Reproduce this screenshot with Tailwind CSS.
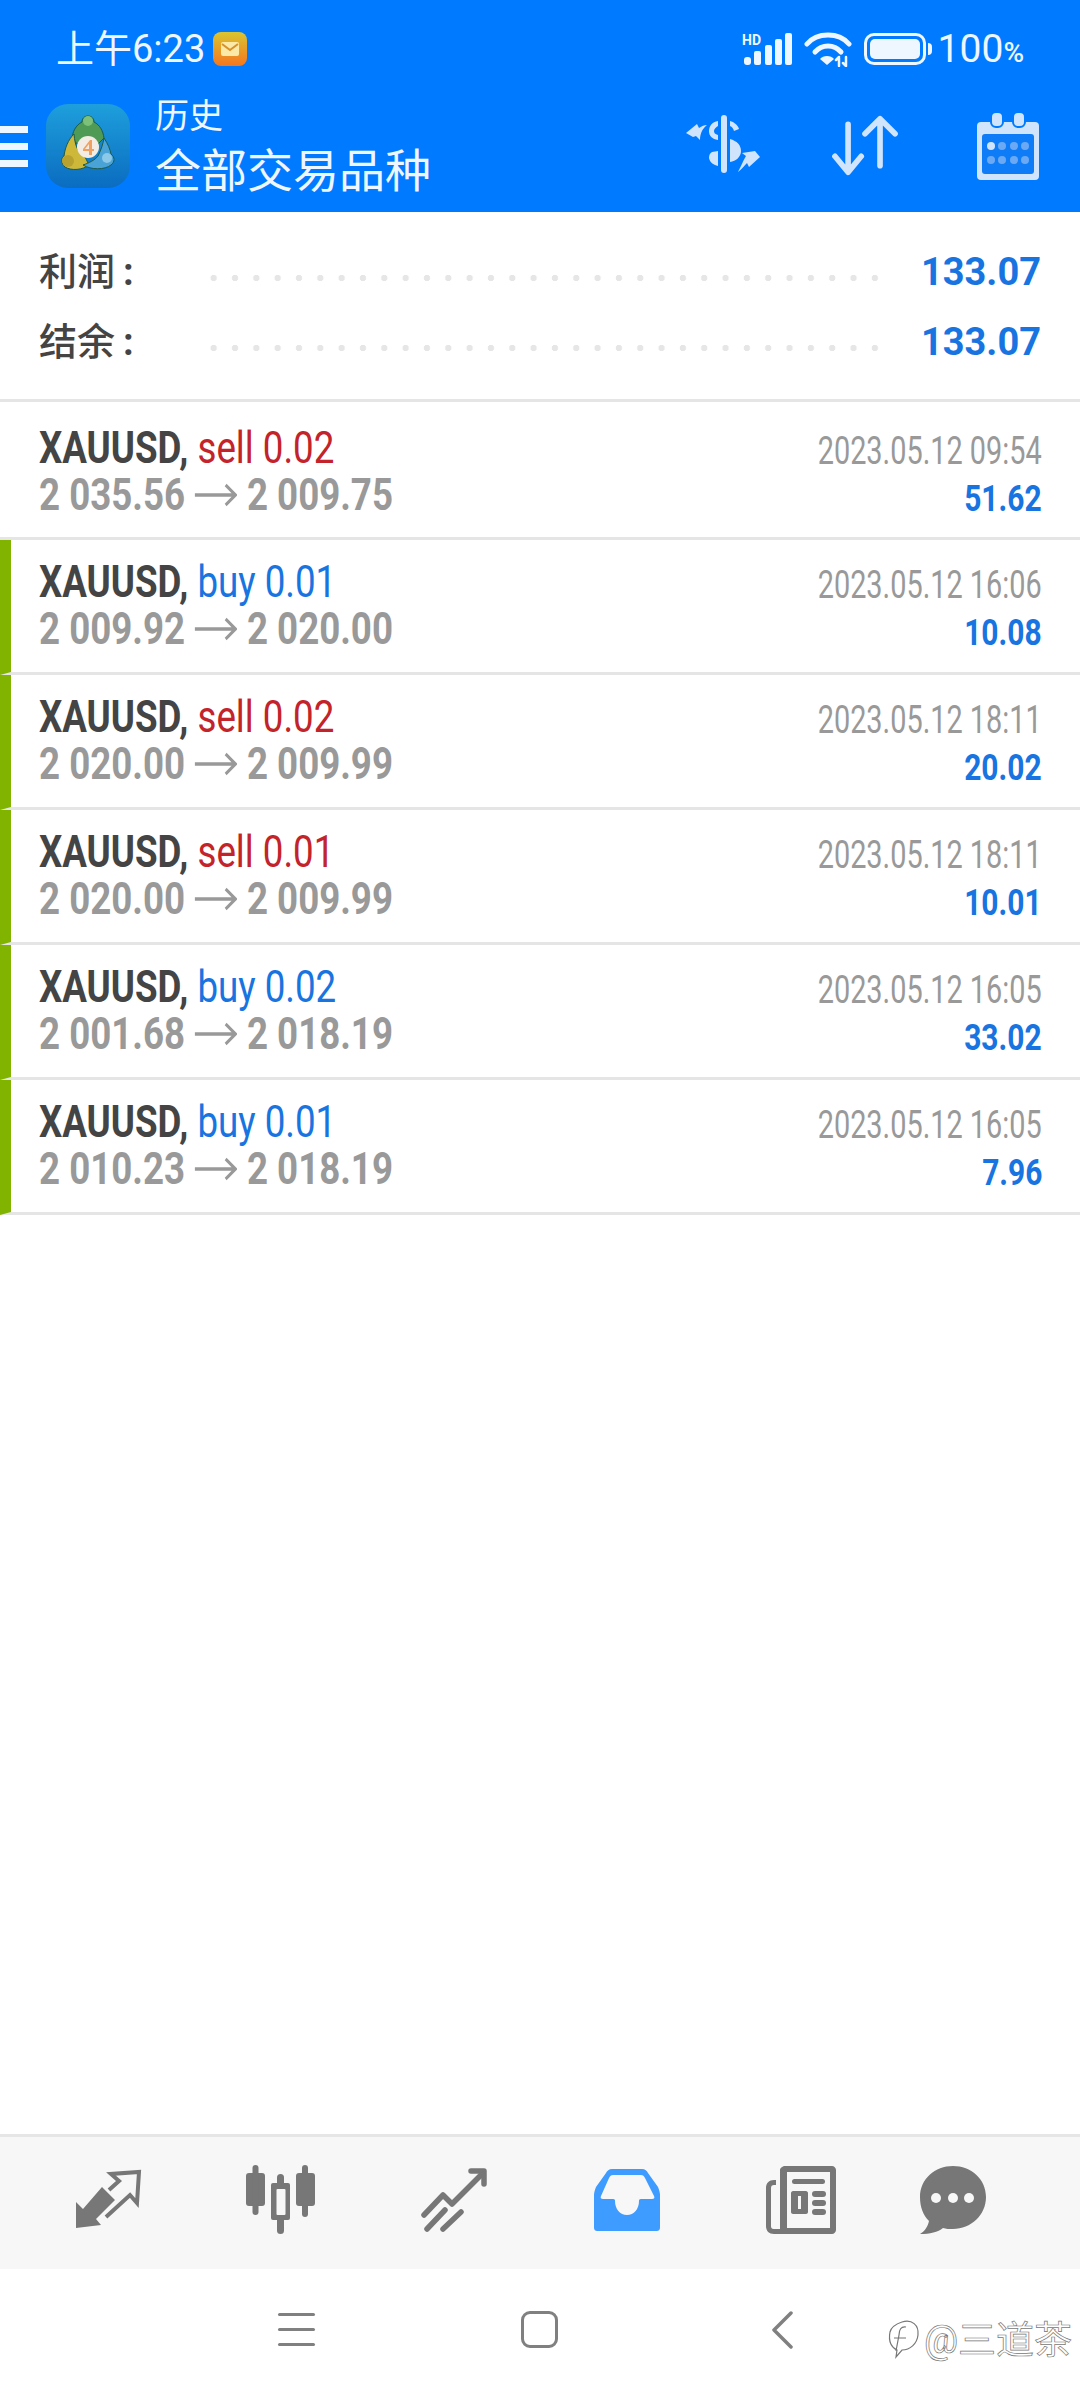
<!DOCTYPE html>
<html lang="zh">
<head>
  <meta charset="UTF-8" />
  <meta name="viewport" content="width=device-width, initial-scale=1.0"/>
  <title>历史</title>
  <script src="https://cdn.jsdelivr.net/npm/@tailwindcss/browser@4"></script>
</head>
<body class="bg-white font-['Roboto','Noto_Sans_CJK_SC',sans-serif]">
<div class="w-[1080px] h-[2400px] flex flex-col overflow-hidden">

  <!-- Header -->
  <div class="h-[212px] shrink-0 bg-[#007aff] text-white">
    <div class="h-[96px] flex items-center justify-between pl-[56px] pr-[56px] pt-[2px]">
      <div class="flex items-center gap-[8px]">
        <span class="text-[38px] text-[#eef6ff]">上午6:23</span>
        <svg class="w-[34px] h-[34px]" viewBox="0 0 34 34">
          <defs><linearGradient id="m" x1="0" y1="0" x2="0" y2="1"><stop offset="0" stop-color="#d9c531"/><stop offset="1" stop-color="#f5761f"/></linearGradient></defs>
          <rect width="34" height="34" rx="8" fill="url(#m)"/>
          <rect x="8" y="10" width="18" height="14" rx="2" fill="#fbe9a8"/>
          <path d="M9 12l8 6 8-6" fill="none" stroke="#d8902a" stroke-width="2"/>
        </svg>
      </div>
      <div class="flex items-center gap-[12px] text-[#eef6ff]">
        <svg class="w-[50px] h-[34px]" viewBox="0 0 50 34" fill="currentColor">
          <text x="0" y="13" font-size="14" font-weight="700" font-family="Roboto">HD</text>
          <rect x="2" y="25" width="7" height="8" rx="3"/><rect x="12" y="19" width="7" height="14" rx="2"/><rect x="23" y="13" width="7" height="20" rx="2"/><rect x="33" y="7" width="7" height="26" rx="2"/><rect x="43" y="1" width="7" height="32" rx="2"/>
        </svg>
        <svg class="w-[48px] h-[36px]" viewBox="0 0 48 36" fill="none" stroke="currentColor" stroke-width="5" stroke-linecap="round">
          <path d="M3 13C13 1 35 1 45 13"/><path d="M11 21c7-8 19-8 26 0"/>
          <path d="M23 34l-7-6c3-4 11-4 14 0z" fill="currentColor" stroke="none"/>
          <path d="M35 35v-8M32 29l3-3M42 26v9M39 32l3 3" stroke-width="2.5"/>
        </svg>
        <div class="flex items-center gap-[2px]">
          <div class="w-[62px] h-[32px] rounded-[10px] border-[3px] border-[#eef6ff] p-[3px]"><div class="w-full h-full rounded-[5px] bg-[#eef6ff]"></div></div>
          <div class="w-[4px] h-[12px] rounded-r bg-[#eef6ff]"></div>
        </div>
        <span class="text-[39px] -ml-[6px]">100<span class="text-[28px] font-medium">%</span></span>
      </div>
    </div>
    <div class="flex items-center h-[116px] pb-[16px]">
      <div class="w-[28px] flex flex-col gap-[10px] shrink-0">
        <div class="h-[7px] bg-[#eef6ff]"></div><div class="h-[7px] bg-[#eef6ff]"></div><div class="h-[7px] bg-[#eef6ff]"></div>
      </div>
      <svg class="w-[84px] h-[84px] ml-[18px] shrink-0" viewBox="0 0 84 84">
        <defs><linearGradient id="l" x1="0" y1="0" x2="0" y2="1"><stop offset="0" stop-color="#1e9fdc"/><stop offset="1" stop-color="#0b6cc0"/></linearGradient></defs>
        <rect width="84" height="84" rx="22" fill="url(#l)"/>
        <g stroke="#1c5a4a" stroke-width="1">
          <path d="M42 12c-4 0-6 3-6 6-6 3-10 10-10 18l6 4h20l6-6c-1-7-4-13-10-16 0-3-2-6-6-6z" fill="#4f9a55"/>
          <path d="M28 30c-6 6-9 14-10 22-3 1-3 8 1 11 6 4 18 3 24-2l-4-8c-6-3-10-10-11-23z" fill="#cdb83a"/>
          <path d="M58 34c4 6 6 11 7 16 4 3 4 8 0 11-6 5-20 5-28 0 6-2 12-5 15-9 3-6 5-12 6-18z" fill="#4aa3d6"/>
        </g>
        <circle cx="42" cy="17" r="5" fill="#7cc07a"/>
        <circle cx="22" cy="57" r="6" fill="#b7a22f"/>
        <circle cx="61" cy="54" r="5" fill="#8cc8e8"/>
        <circle cx="42" cy="43" r="11" fill="#f3ece4"/>
        <path d="M44 36l-7 9v2h6v4h3v-4h2v-2h-2v-9zm-1 4v5h-4z" fill="#f0a060"/>
      </svg>
      <div class="ml-[25px] self-start">
        <div class="text-[34px] leading-[40px] text-[#eef6ff]">历史</div>
        <div class="text-[46px] leading-[54px] mt-[8px] text-[#eef6ff]">全部交易品种</div>
      </div>
      <div class="ml-auto flex items-center pr-[40px] text-[#d0e4fc]">
        <svg class="w-[76px] h-[62px]" viewBox="0 0 76 62" fill="currentColor">
          <rect x="36" y="0" width="6" height="58" rx="3"/>
          <path d="M33 6c-6 1-9 5-9 10s3 8 9 9v-5c-3-1-4-2-4-4s2-4 4-5zM45 6c4 1 8 4 9 8l-5 2c-1-3-2-4-4-5zM45 24c7 2 11 6 11 12s-5 10-11 11zM33 36v15c-4-1-8-3-9-8 0-3 1-5 3-6z"/>
          <path d="M1 18l11-9 2 4c3-2 5-3 8-3-4 3-7 8-7 15l-4-4-3 1z"/>
          <path d="M75 40l-11 10-2-4c-3 3-5 6-9 9 3-6 5-11 8-16l-4-3 13-2z" transform="translate(0,2)"/>
        </svg>
        <svg class="w-[68px] h-[62px] ml-[70px]" viewBox="0 0 72 66" fill="none" stroke="currentColor" stroke-width="6" stroke-linecap="round" stroke-linejoin="round">
          <path d="M18 10v50M4 44l14 17 14-17"/>
          <path d="M52 4v50M36 20L52 4l16 16"/>
        </svg>
        <svg class="w-[64px] h-[68px] ml-[77px]" viewBox="0 0 64 68">
          <path d="M5 10h54a4 4 0 0 1 4 4v50a4 4 0 0 1-4 4H5a4 4 0 0 1-4-4V14a4 4 0 0 1 4-4z" fill="currentColor"/>
          <rect x="15" y="0" width="12" height="15" rx="5" fill="currentColor" stroke="#007aff" stroke-width="2"/>
          <rect x="37" y="0" width="12" height="15" rx="5" fill="currentColor" stroke="#007aff" stroke-width="2"/>
          <rect x="6" y="22" width="52" height="40" rx="3" fill="#0e7cf6"/>
          <g fill="#6ba9f5"><circle cx="15" cy="34" r="4" fill="#d0e4fc"/><circle cx="26" cy="34" r="4"/><circle cx="38" cy="34" r="4"/><circle cx="49" cy="34" r="4"/><circle cx="15" cy="48" r="4"/><circle cx="26" cy="48" r="4"/><circle cx="38" cy="48" r="4"/><circle cx="49" cy="48" r="4"/></g>
        </svg>
      </div>
    </div>
  </div>

  <!-- Summary -->
  <div class="h-[190px] shrink-0 border-b-[3px] border-[#e5e5e5] pt-[25px] pl-[39px] pr-[39px]">
    <div class="h-[70px] flex items-center">
      <span class="w-[164px] text-[38px] font-medium text-[#444]">利润<span class="ml-[8px] font-bold">:</span></span>
      <div class="w-[677px] h-[8px] mt-[12px] bg-[radial-gradient(circle,#e6e6e6_3px,transparent_3.5px)] bg-[length:21.33px_8px]"></div>
      <span class="ml-auto text-[38px] font-bold text-[#1874e0]">133.07</span>
    </div>
    <div class="h-[70px] flex items-center">
      <span class="w-[164px] text-[38px] font-medium text-[#444]">结余<span class="ml-[8px] font-bold">:</span></span>
      <div class="w-[677px] h-[8px] mt-[12px] bg-[radial-gradient(circle,#e6e6e6_3px,transparent_3.5px)] bg-[length:21.33px_8px]"></div>
      <span class="ml-auto text-[38px] font-bold text-[#1874e0]">133.07</span>
    </div>
  </div>

  <!-- Deals -->
  <div id="deals">
    <div class="h-[138px] border-b-[3px] border-[#e5e5e5] flex pl-[39px] pr-[38px] pt-[22px]">
      <div class="flex-1 origin-left scale-x-[.815]">
        <div class="text-[45px] leading-[47px] whitespace-nowrap"><b class="text-[#444]">XAUUSD,</b> <span class="text-[#c3232a]">sell 0.02</span></div>
        <div class="text-[45px] leading-[48px] font-bold text-[#999] whitespace-nowrap flex items-center gap-[12px]">2 035.56 <svg class="w-[52px] h-[24px]" viewBox="0 0 52 24" fill="none" stroke="#999" stroke-width="3.5"><path d="M0 12h50M38 2l12 10-12 10"/></svg> 2 009.75</div>
      </div>
      <div class="flex flex-col items-end mt-[3px]">
        <div class="text-[39px] leading-[48px] text-[#999] whitespace-nowrap origin-right scale-x-[.74]">2023.05.12 09:54</div>
        <div class="text-[37px] leading-[48px] font-bold text-[#1874e0] origin-right scale-x-[.81]">51.62</div>
      </div>
    </div>
    <div class="h-[135px] border-b-[3px] border-[#e5e5e5] border-l-[11px] border-l-[#80b400] flex pl-[28px] pr-[38px] pt-[18px]">
      <div class="flex-1 origin-left scale-x-[.815]">
        <div class="text-[45px] leading-[47px] whitespace-nowrap"><b class="text-[#444]">XAUUSD,</b> <span class="text-[#1874e0]">buy 0.01</span></div>
        <div class="text-[45px] leading-[48px] font-bold text-[#999] whitespace-nowrap flex items-center gap-[12px]">2 009.92 <svg class="w-[52px] h-[24px]" viewBox="0 0 52 24" fill="none" stroke="#999" stroke-width="3.5"><path d="M0 12h50M38 2l12 10-12 10"/></svg> 2 020.00</div>
      </div>
      <div class="flex flex-col items-end mt-[3px]">
        <div class="text-[39px] leading-[48px] text-[#999] whitespace-nowrap origin-right scale-x-[.74]">2023.05.12 16:06</div>
        <div class="text-[37px] leading-[48px] font-bold text-[#1874e0] origin-right scale-x-[.81]">10.08</div>
      </div>
    </div>
    <div class="h-[135px] border-b-[3px] border-[#e5e5e5] border-l-[11px] border-l-[#80b400] flex pl-[28px] pr-[38px] pt-[18px]">
      <div class="flex-1 origin-left scale-x-[.815]">
        <div class="text-[45px] leading-[47px] whitespace-nowrap"><b class="text-[#444]">XAUUSD,</b> <span class="text-[#c3232a]">sell 0.02</span></div>
        <div class="text-[45px] leading-[48px] font-bold text-[#999] whitespace-nowrap flex items-center gap-[12px]">2 020.00 <svg class="w-[52px] h-[24px]" viewBox="0 0 52 24" fill="none" stroke="#999" stroke-width="3.5"><path d="M0 12h50M38 2l12 10-12 10"/></svg> 2 009.99</div>
      </div>
      <div class="flex flex-col items-end mt-[3px]">
        <div class="text-[39px] leading-[48px] text-[#999] whitespace-nowrap origin-right scale-x-[.74]">2023.05.12 18:11</div>
        <div class="text-[37px] leading-[48px] font-bold text-[#1874e0] origin-right scale-x-[.81]">20.02</div>
      </div>
    </div>
    <div class="h-[135px] border-b-[3px] border-[#e5e5e5] border-l-[11px] border-l-[#80b400] flex pl-[28px] pr-[38px] pt-[18px]">
      <div class="flex-1 origin-left scale-x-[.815]">
        <div class="text-[45px] leading-[47px] whitespace-nowrap"><b class="text-[#444]">XAUUSD,</b> <span class="text-[#c3232a]">sell 0.01</span></div>
        <div class="text-[45px] leading-[48px] font-bold text-[#999] whitespace-nowrap flex items-center gap-[12px]">2 020.00 <svg class="w-[52px] h-[24px]" viewBox="0 0 52 24" fill="none" stroke="#999" stroke-width="3.5"><path d="M0 12h50M38 2l12 10-12 10"/></svg> 2 009.99</div>
      </div>
      <div class="flex flex-col items-end mt-[3px]">
        <div class="text-[39px] leading-[48px] text-[#999] whitespace-nowrap origin-right scale-x-[.74]">2023.05.12 18:11</div>
        <div class="text-[37px] leading-[48px] font-bold text-[#1874e0] origin-right scale-x-[.81]">10.01</div>
      </div>
    </div>
    <div class="h-[135px] border-b-[3px] border-[#e5e5e5] border-l-[11px] border-l-[#80b400] flex pl-[28px] pr-[38px] pt-[18px]">
      <div class="flex-1 origin-left scale-x-[.815]">
        <div class="text-[45px] leading-[47px] whitespace-nowrap"><b class="text-[#444]">XAUUSD,</b> <span class="text-[#1874e0]">buy 0.02</span></div>
        <div class="text-[45px] leading-[48px] font-bold text-[#999] whitespace-nowrap flex items-center gap-[12px]">2 001.68 <svg class="w-[52px] h-[24px]" viewBox="0 0 52 24" fill="none" stroke="#999" stroke-width="3.5"><path d="M0 12h50M38 2l12 10-12 10"/></svg> 2 018.19</div>
      </div>
      <div class="flex flex-col items-end mt-[3px]">
        <div class="text-[39px] leading-[48px] text-[#999] whitespace-nowrap origin-right scale-x-[.74]">2023.05.12 16:05</div>
        <div class="text-[37px] leading-[48px] font-bold text-[#1874e0] origin-right scale-x-[.81]">33.02</div>
      </div>
    </div>
    <div class="h-[135px] border-b-[3px] border-[#e5e5e5] border-l-[11px] border-l-[#80b400] flex pl-[28px] pr-[38px] pt-[18px]">
      <div class="flex-1 origin-left scale-x-[.815]">
        <div class="text-[45px] leading-[47px] whitespace-nowrap"><b class="text-[#444]">XAUUSD,</b> <span class="text-[#1874e0]">buy 0.01</span></div>
        <div class="text-[45px] leading-[48px] font-bold text-[#999] whitespace-nowrap flex items-center gap-[12px]">2 010.23 <svg class="w-[52px] h-[24px]" viewBox="0 0 52 24" fill="none" stroke="#999" stroke-width="3.5"><path d="M0 12h50M38 2l12 10-12 10"/></svg> 2 018.19</div>
      </div>
      <div class="flex flex-col items-end mt-[3px]">
        <div class="text-[39px] leading-[48px] text-[#999] whitespace-nowrap origin-right scale-x-[.74]">2023.05.12 16:05</div>
        <div class="text-[37px] leading-[48px] font-bold text-[#1874e0] origin-right scale-x-[.81]">7.96</div>
      </div>
    </div>
  </div>

  <div class="flex-1"></div>

  <!-- Tab bar -->
  <div class="h-[135px] shrink-0 border-t-[3px] border-[#e6e6e6] bg-[#f7f7f7] flex items-center pl-[75px] pb-[6px] text-[#777]">
    <svg class="w-[68px] h-[62px]" viewBox="0 0 68 62">
      <path d="M1 59V33l7 7 19-22 13 13-19 19 5 6z" fill="currentColor"/>
      <path d="M34 21l10-9-8-7 28-2-2 31-7-8-24 22" fill="none" stroke="currentColor" stroke-width="4"/>
    </svg>
    <svg class="w-[70px] h-[70px] ml-[103px]" viewBox="0 0 70 70" fill="currentColor">
      <rect x="0" y="8" width="19" height="33" rx="3"/><rect x="6.5" y="0" width="6" height="50" rx="3"/>
      <rect x="31" y="9" width="7" height="60" rx="3.5"/>
      <rect x="25" y="18" width="19" height="37" rx="2"/><rect x="30.5" y="24" width="9" height="26" rx="1" fill="#f7f7f7"/>
      <rect x="50" y="8" width="19" height="33" rx="3"/><rect x="56" y="0" width="6" height="52" rx="3"/>
    </svg>
    <svg class="w-[66px] h-[64px] ml-[105px]" viewBox="0 0 66 64" fill="none" stroke="currentColor" stroke-width="5.5" stroke-linecap="round" stroke-linejoin="round">
      <path d="M3 47l19-20 9 9 29-29"/><path d="M50 3h13v13"/>
      <path d="M6 61l18-19M22 61l18-17"/>
    </svg>
    <svg class="w-[66px] h-[62px] ml-[107px]" viewBox="0 0 66 62" fill="#3e9bff">
      <path fill-rule="evenodd" d="M18 0h30c3 0 5 2 6 4l10 14c1 3 2 5 2 8v32c0 3-1 4-4 4H4c-3 0-4-1-4-4V26c0-3 1-5 2-8L12 4c1-2 3-4 6-4zm1 6c-2 0-3 1-4 3L7 27c-1 2 0 3 2 3h10c2 0 2 1 2 2 0 8 5 14 12 14s12-6 12-14c0-1 0-2 2-2h11c2 0 3-1 2-3L51 9c-1-2-2-3-4-3z"/>
    </svg>
    <svg class="w-[70px] h-[68px] ml-[106px]" viewBox="0 0 70 68" fill="currentColor">
      <path fill-rule="evenodd" d="M19 0h47c2 0 4 2 4 4v60c0 2-2 4-4 4H8c-5 0-8-3-8-8V22c0-5 3-8 8-8h2v5H8c-2 0-3 1-3 3v38c0 3 2 3 4 3h5V4c0-2 3-4 5-4zm2 6v56h43V6z"/>
      <rect x="26" y="13" width="33" height="5" rx="2.5"/>
      <path fill-rule="evenodd" d="M27 25h13c1 0 2 1 2 2v19c0 1-1 2-2 2H27c-1 0-2-1-2-2V27c0-1 1-2 2-2zm5 5v13h3V30z"/>
      <rect x="46" y="25" width="14" height="6" rx="3"/><rect x="46" y="34" width="14" height="6" rx="3"/><rect x="46" y="43" width="14" height="6" rx="3"/>
    </svg>
    <svg class="w-[66px] h-[68px] ml-[84px]" viewBox="0 0 66 68" fill="currentColor">
      <path d="M33 0c18 0 33 13 33 31S51 63 33 63c-4 0-7 0-10-1-5 4-13 6-23 6 5-3 8-8 9-13C3 49 0 41 0 31 0 13 15 0 33 0z"/>
      <g fill="#f7f7f7"><circle cx="16" cy="32" r="5"/><circle cx="33" cy="32" r="5"/><circle cx="49" cy="32" r="5"/></g>
    </svg>
  </div>

  <!-- Navigation bar -->
  <div class="h-[131px] shrink-0 relative flex items-center pb-[10px] text-[#808080]">
    <div class="w-[37px] ml-[278px] flex flex-col gap-[12px]">
      <div class="h-[3px] rounded bg-[#808080]"></div><div class="h-[3px] rounded bg-[#808080]"></div><div class="h-[3px] rounded bg-[#808080]"></div>
    </div>
    <div class="w-[37px] h-[37px] ml-[206px] rounded-[9px] border-[3px] border-[#808080]"></div>
    <svg class="w-[22px] h-[38px] ml-[213px]" viewBox="0 0 22 38" fill="none" stroke="currentColor" stroke-width="3.5" stroke-linecap="round" stroke-linejoin="round"><path d="M20 2L3 19l17 17"/></svg>
    <!-- watermark overlay -->
    <div class="absolute right-[8px] top-[47px] flex items-center gap-[4px] text-[38px] leading-[48px] text-white [-webkit-text-stroke:0.7px_#777]">
      <svg class="w-[34px] h-[44px]" viewBox="0 0 34 44" fill="none" stroke="#777" stroke-width="1.2"><path d="M16 4c10-3 17 3 16 13-1 9-8 15-16 15l-6 7 1-7C6 30 2 24 4 14c1-4 6-8 12-10z"/><path d="M20 9c-5-1-7 3-7 8l-3 16M8 20h12"/></svg>
      <span>@三道茶</span>
    </div>
  </div>
</div>
</body>
</html>
